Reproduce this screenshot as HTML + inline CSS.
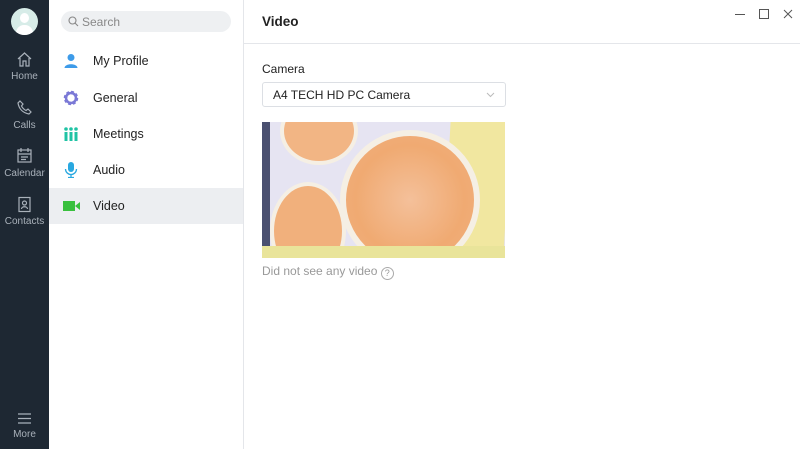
<!DOCTYPE html>
<html><head><style>
body{margin:0;width:800px;height:449px;overflow:hidden;font-family:"Liberation Sans",sans-serif;background:#fff;position:relative}
.side{position:absolute;left:0;top:0;width:49px;height:449px;background:#1e2833}
.side .lbl{position:absolute;width:49px;text-align:center;color:#a9b1ba;font-size:10px}
.side svg{position:absolute;left:16px}
.mid{position:absolute;left:49px;top:0;width:194px;height:449px;background:#fff;border-right:1px solid #e4e6ea}
.search{position:absolute;left:12px;top:11px;width:170px;height:21px;border-radius:11px;background:#eef0f2;color:#888;font-size:12px;line-height:22px;text-indent:21px}
.item{position:absolute;left:0;width:194px;height:36px;font-size:12.5px;color:#222;line-height:37px;text-indent:44px}
.item svg{position:absolute;left:14px;top:10px}
.right{position:absolute;left:244px;top:0;right:0;height:449px}
</style></head><body>
<div class="side">
<div style="position:absolute;left:11px;top:8px;width:27px;height:27px;border-radius:50%;background:#d7ece8;overflow:hidden"><div style="position:absolute;left:9px;top:5px;width:9px;height:10px;border-radius:50%;background:#fff"></div><div style="position:absolute;left:5px;top:17px;width:17px;height:12px;border-radius:8px 8px 0 0;background:#fff"></div></div>
<svg style="top:51px" width="17" height="17" viewBox="0 0 17 17" fill="none" stroke="#a9b1ba" stroke-width="1.2"><path d="M2 8L8.5 2L15 8M4 7v8h3v-5h3v5h3V7"/></svg>
<div class="lbl" style="top:71px">Home</div>
<svg style="top:99px" width="17" height="17" viewBox="0 0 17 17" fill="none" stroke="#a9b1ba" stroke-width="1.2"><path d="M4 2l3 3-1.5 2c1 2 2.5 3.5 4.5 4.5L12 10l3 3-2 2C7 14 3 10 2 4z"/></svg>
<div class="lbl" style="top:120px">Calls</div>
<svg style="top:147px" width="17" height="17" viewBox="0 0 17 17" fill="none" stroke="#a9b1ba" stroke-width="1.2"><rect x="2" y="3" width="13" height="12"/><path d="M5 1v4M12 1v4M2 7h13M5 10h7M5 12.5h5"/></svg>
<div class="lbl" style="top:168px">Calendar</div>
<svg style="top:196px" width="17" height="17" viewBox="0 0 17 17" fill="none" stroke="#a9b1ba" stroke-width="1.2"><rect x="3" y="1.5" width="11" height="14"/><circle cx="8.5" cy="7" r="2"/><path d="M5.5 13c0-3 6-3 6 0"/></svg>
<div class="lbl" style="top:216px">Contacts</div>
<svg style="top:410px" width="17" height="17" viewBox="0 0 17 17" fill="none" stroke="#a9b1ba" stroke-width="1.2"><path d="M2 4h13M2 8.5h13M2 13h13"/></svg>
<div class="lbl" style="top:429px">More</div>
</div>
<div class="mid">
<div class="search">Search<svg style="position:absolute;left:7px;top:5px" width="11" height="11" viewBox="0 0 11 11" fill="none" stroke="#888" stroke-width="1.1"><circle cx="4.5" cy="4.5" r="3.5"/><path d="M7 7l3 3"/></svg></div>
<div class="item" style="top:43px"><svg width="16" height="16"><circle cx="8" cy="4.5" r="3.5" fill="#3d9be9"/><path d="M1.5 15c0-5 13-5 13 0z" fill="#3d9be9"/></svg>My Profile</div>
<div class="item" style="top:80px"><svg width="16" height="16"><circle cx="8" cy="8" r="5.5" fill="none" stroke="#7b79d6" stroke-width="3.5" stroke-dasharray="2.5 1.8"/><circle cx="8" cy="8" r="5" fill="none" stroke="#7b79d6" stroke-width="2.5"/></svg>General</div>
<div class="item" style="top:116px"><svg width="16" height="16" fill="#1fc3a4"><circle cx="3" cy="3" r="1.8"/><circle cx="8" cy="3" r="1.8"/><circle cx="13" cy="3" r="1.8"/><rect x="1.5" y="6" width="3" height="9"/><rect x="6.5" y="6" width="3" height="9"/><rect x="11.5" y="6" width="3" height="9"/></svg>Meetings</div>
<div class="item" style="top:152px"><svg width="16" height="16"><rect x="5" y="0" width="6" height="10" rx="3" fill="#29a8e0"/><path d="M2.5 7a5.5 5.5 0 0011 0M8 12.5v3M5 15.5h6" stroke="#29a8e0" fill="none" stroke-width="1.3"/></svg>Audio</div>
<div class="item" style="top:188px;background:#eceef1"><svg width="18" height="16" fill="#39c03e"><rect x="0" y="3" width="12" height="10"/><path d="M12 8l5-4v8z"/></svg>Video</div>
</div>
<div class="right">
<div style="position:absolute;left:18px;top:14px;font-size:13.5px;font-weight:bold;color:#222">Video</div>
<div style="position:absolute;left:0;right:0;top:43px;border-top:1px solid #e4e6ea"></div>
<svg style="position:absolute;left:490px;top:8px" width="62" height="12" fill="none" stroke="#555" stroke-width="1"><path d="M1 6.5h10"/><rect x="25.5" y="1.5" width="9" height="9"/><path d="M50 2l8 8M58 2l-8 8"/></svg>
<div style="position:absolute;left:18px;top:62px;font-size:12px;color:#222">Camera</div>
<div style="position:absolute;left:18px;top:82px;width:242px;height:23px;border:1px solid #dcdfe4;border-radius:3px;font-size:12px;color:#222;line-height:24px;text-indent:10px">A4 TECH HD PC Camera<svg style="position:absolute;right:10px;top:9px" width="9" height="6" fill="none" stroke="#bbb"><path d="M1 1l3.5 3.5L8 1"/></svg></div>
<div style="position:absolute;left:18px;top:122px;width:243px;height:136px;overflow:hidden;background:#e6e4f2">
<div style="position:absolute;left:0;top:0;width:8px;height:136px;background:#4a5070"></div>
<div style="position:absolute;left:18px;top:-25px;width:70px;height:60px;border-radius:50%;background:#f2b584;border:4px solid #f5efe4"></div>
<div style="position:absolute;left:8px;top:60px;width:68px;height:90px;border-radius:50%;background:#f1b07c;border:4px solid #f5efe4"></div>
<div style="position:absolute;left:185px;top:0;width:60px;height:136px;background:#f1e7a0;transform:skewX(-3deg)"></div>
<div style="position:absolute;left:78px;top:8px;width:128px;height:128px;border-radius:50%;background:radial-gradient(circle at 50% 50%,#f4c09a 0,#f0aa72 60%,#f2b080 100%);border:6px solid #f5efe4"></div>
<div style="position:absolute;left:0;top:124px;width:243px;height:12px;background:#e9e49a"></div>
</div>
<div style="position:absolute;left:18px;top:264px;font-size:12px;color:#999">Did not see any video <span style="display:inline-block;width:11px;height:11px;border:1px solid #aaa;border-radius:50%;font-size:9px;line-height:11px;text-align:center;vertical-align:-1px">?</span></div>
</div>
</body></html>
